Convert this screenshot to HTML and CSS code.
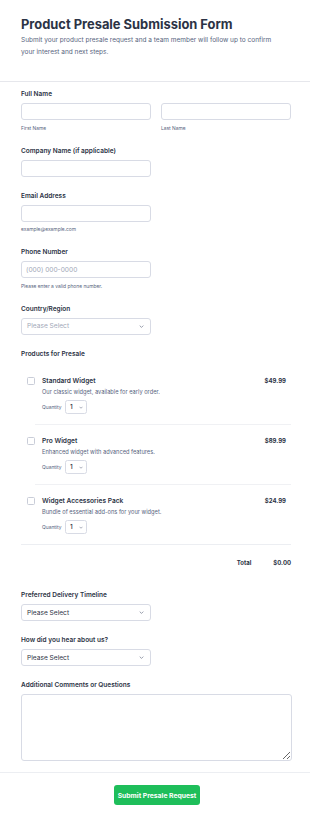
FILE: index.html
```html
<!DOCTYPE html>
<html lang="en">
<head>
<meta charset="utf-8">
<title>Product Presale Submission Form</title>
<link rel="stylesheet" href="styles.css">
</head>
<body>
<header class="header">
  <h1 class="title">Product Presale Submission Form</h1>
  <p class="subtitle">Submit your product presale request and a team member will follow up to confirm your interest and next steps.</p>
</header>
<form class="form">
  <div class="field">
    <div class="label">Full Name</div>
    <div class="two-col">
      <div class="col">
        <div class="input"></div>
        <div class="helper">First Name</div>
      </div>
      <div class="col">
        <div class="input"></div>
        <div class="helper">Last Name</div>
      </div>
    </div>
  </div>
  <div class="field">
    <div class="label">Company Name (if applicable)</div>
    <div class="input half"></div>
  </div>
  <div class="field">
    <div class="label">Email Address</div>
    <div class="input half"></div>
    <div class="helper">example@example.com</div>
  </div>
  <div class="field">
    <div class="label">Phone Number</div>
    <div class="input half"><span class="placeholder">(000) 000-0000</span></div>
    <div class="helper">Please enter a valid phone number.</div>
  </div>
  <div class="field">
    <div class="label">Country/Region</div>
    <div class="input half select"><span class="placeholder">Please Select</span>
      <svg class="chev" viewBox="0 0 8 5" width="5" height="3"><path d="M1 1l3 3 3-3" fill="none" stroke="#7c8296" stroke-width="1.3"/></svg>
    </div>
  </div>
  <div class="field">
    <div class="label">Products for Presale</div>
    <div class="products">
      <div class="product">
        <span class="checkbox"></span>
        <div class="pinfo">
          <div class="pname">Standard Widget</div>
          <div class="pdesc">Our classic widget, available for early order.</div>
          <div class="qty"><span class="qlabel">Quantity</span><span class="qsel">1<svg viewBox="0 0 8 5" width="4" height="3"><path d="M1 1l3 3 3-3" fill="none" stroke="#7c8296" stroke-width="1.3"/></svg></span></div>
        </div>
        <div class="price">$49.99</div>
      </div>
      <div class="divider"></div>
      <div class="product">
        <span class="checkbox"></span>
        <div class="pinfo">
          <div class="pname">Pro Widget</div>
          <div class="pdesc">Enhanced widget with advanced features.</div>
          <div class="qty"><span class="qlabel">Quantity</span><span class="qsel">1<svg viewBox="0 0 8 5" width="4" height="3"><path d="M1 1l3 3 3-3" fill="none" stroke="#7c8296" stroke-width="1.3"/></svg></span></div>
        </div>
        <div class="price">$89.99</div>
      </div>
      <div class="divider"></div>
      <div class="product">
        <span class="checkbox"></span>
        <div class="pinfo">
          <div class="pname">Widget Accessories Pack</div>
          <div class="pdesc">Bundle of essential add-ons for your widget.</div>
          <div class="qty"><span class="qlabel">Quantity</span><span class="qsel">1<svg viewBox="0 0 8 5" width="4" height="3"><path d="M1 1l3 3 3-3" fill="none" stroke="#7c8296" stroke-width="1.3"/></svg></span></div>
        </div>
        <div class="price">$24.99</div>
      </div>
      <div class="divider full"></div>
      <div class="total"><span class="tlabel">Total</span><span class="tval">$0.00</span></div>
    </div>
  </div>
  <div class="field after-total">
    <div class="label">Preferred Delivery Timeline</div>
    <div class="input half select"><span class="value">Please Select</span>
      <svg class="chev" viewBox="0 0 8 5" width="5" height="3"><path d="M1 1l3 3 3-3" fill="none" stroke="#7c8296" stroke-width="1.3"/></svg>
    </div>
  </div>
  <div class="field">
    <div class="label">How did you hear about us?</div>
    <div class="input half select"><span class="value">Please Select</span>
      <svg class="chev" viewBox="0 0 8 5" width="5" height="3"><path d="M1 1l3 3 3-3" fill="none" stroke="#7c8296" stroke-width="1.3"/></svg>
    </div>
  </div>
  <div class="field">
    <div class="label">Additional Comments or Questions</div>
    <textarea class="textarea"></textarea>
  </div>
</form>
<div class="footer">
  <button class="submit" type="button">Submit Presale Request</button>
</div>
</body>
</html>
```

FILE: styles.css
```css
* { box-sizing: border-box; }
html, body { margin: 0; padding: 0; background: #fff; }
body {
  font-family: Inter, "Noto Sans", sans-serif;
  color: #2c3345;
  width: 310px;
}
.header {
  padding: 15px 21px 23px;
  border-bottom: 1px solid #e6e7ec;
}
.title {
  margin: 0;
  font-size: 12.9px;
  line-height: 19px;
  font-weight: 700;
  color: #2c3345;
}
.subtitle {
  margin: 0;
  max-width: 262px;
  font-size: 6.5px;
  line-height: 12px;
  color: #57647e;
}
.form {
  padding: 7px 19px 0 21px;
}
.field { margin-bottom: 14px; }
.label {
  font-size: 6.5px;
  line-height: 10px;
  font-weight: 600;
  color: #2c3345;
  margin-bottom: 4px;
}
.two-col {
  display: grid;
  grid-template-columns: 130px 130px;
  gap: 10px;
}
.input {
  height: 17px;
  border: 1px solid #d8dbe5;
  border-radius: 3px;
  background: #fff;
  display: flex;
  align-items: center;
  padding: 0 4px;
}
.input.half { width: 130px; }
.helper {
  margin-top: 4.5px;
  font-size: 4.9px;
  line-height: 7px;
  color: #57647e;
}
.placeholder {
  font-size: 6.6px;
  color: #a2a8b8;
}
.value {
  font-size: 6.6px;
  color: #2c3345;
}
.select { justify-content: space-between; padding: 0 5px; }
.chev { margin-right: 1px; }
.products { margin-top: 6.5px; }
.product {
  display: flex;
  align-items: flex-start;
  padding: 11px 5px 10px 6px;
}
.checkbox {
  width: 8px;
  height: 8px;
  border: 1px solid #c9cdd8;
  border-radius: 1.5px;
  margin-top: 1px;
  flex: none;
}
.pinfo {
  flex: 1;
  margin-left: 7px;
}
.pname {
  font-size: 6.6px;
  line-height: 10px;
  font-weight: 600;
  color: #2c3345;
}
.pdesc {
  margin-top: 2px;
  font-size: 5.7px;
  line-height: 8px;
  color: #57647e;
}
.qty {
  margin-top: 4px;
  display: flex;
  align-items: center;
  height: 14px;
}
.qlabel {
  font-size: 4.9px;
  color: #57647e;
  margin-right: 3.5px;
}
.qsel {
  width: 22px;
  height: 14px;
  border: 1px solid #d8dbe5;
  border-radius: 2.5px;
  display: flex;
  align-items: center;
  justify-content: space-between;
  padding: 0 3px 0 4px;
  font-size: 6.5px;
  font-weight: 500;
  color: #2c3345;
}
.price {
  font-size: 6px;
  line-height: 10px;
  font-weight: 700;
  color: #2c3345;
}
.divider {
  height: 1px;
  margin-left: 14px;
  background: #f0f1f4;
}
.divider.full { margin-left: 0; background: #eceef2; }
.total {
  margin-top: 13px;
  display: flex;
  justify-content: flex-end;
  font-size: 6px;
  line-height: 10px;
  font-weight: 700;
  color: #2c3345;
}
.tlabel { margin-right: 22px; }
.after-total { margin-top: 22px; }
.textarea {
  display: block;
  width: 271px;
  height: 67px;
  border: 1px solid #d8dbe5;
  border-radius: 3px;
  margin: 0;
  padding: 4px;
  font-family: inherit;
  background: #fff;
}
.form .field:last-child { margin-bottom: 11px; }
.footer {
  border-top: 1px solid #eceef2;
  padding: 12px 0 0 4px;
  display: flex;
  justify-content: center;
}
.submit {
  width: 86px;
  height: 20px;
  border: none;
  border-radius: 3px;
  background: #1ebe5a;
  color: #fff;
  font-family: inherit;
  font-size: 6.8px;
  font-weight: 700;
  padding: 0;
}
```
